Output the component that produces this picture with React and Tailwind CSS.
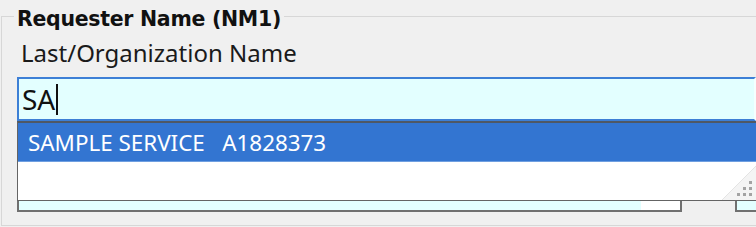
export default function App() {
  return (
    <div className="relative h-[227px] w-[756px] overflow-hidden bg-[#f0f0f0] font-['Noto_Sans',sans-serif]">
      <div className="relative ml-[1px] mt-[16px] h-[210px] border-b border-l border-t border-[#d7d7d7]">
        <div className="absolute left-[12px] top-[-9px] bg-[#f0f0f0] px-[3px] font-['DejaVu_Sans',sans-serif] text-[20.5px] font-bold leading-[22px] tracking-[-0.3px] text-[#111]">
          Requester Name (NM1)
        </div>

        <div className="pl-[19px] pt-[24px] text-[24px] leading-[24px] text-[#1a1a1a]">
          Last/Organization Name
        </div>

        <div className="ml-[15px] mt-[12px] flex h-[44px] items-center border-2 border-[#3d7fd6] border-r-[#f4ffff] bg-[#e3ffff] pl-[3px] text-[28px] leading-[38px] text-[#111]">
          <span>SA</span>
          <span className="ml-[1px] h-[31px] w-[2px] bg-[#111]" />
        </div>

        <div className="ml-[15px] mt-[50px] flex items-start">
          <div className="flex h-[41px] w-[665px] border-b-2 border-l-2 border-r-2 border-[#707070]">
            <div className="flex-1 bg-[#e3ffff]" />
            <div className="w-[39px] bg-white" />
          </div>
          <div className="ml-[53px] h-[41px] flex-1 border-b-2 border-l-2 border-[#707070] bg-[#e3ffff]" />
        </div>

        {/* autocomplete dropdown */}
        <div className="absolute left-[15px] top-[104px] h-[80px] w-[742px] border border-[#646464] border-t-2 border-t-[#4f5864] bg-white">
          <div className="flex h-[39px] items-center border-b border-[#6f9fe0] bg-[#3375d1] pl-[10px] text-[22.4px] leading-[31px] text-white">
            SAMPLE SERVICE&nbsp;&nbsp;&nbsp;A1828373
          </div>
          <svg className="absolute bottom-0 right-[2px]" width="34" height="34" viewBox="0 0 34 34">
            <polygon points="34,0 34,34 0,34" fill="#f4f4f4" />
            <line x1="34" y1="0" x2="0" y2="34" stroke="#e4e4e4" />
            <rect x="27" y="15" width="3" height="3" fill="#a3a3a3" />
            <rect x="21" y="21" width="3" height="3" fill="#a3a3a3" />
            <rect x="27" y="21" width="3" height="3" fill="#a3a3a3" />
            <rect x="15" y="27" width="3" height="3" fill="#a3a3a3" />
            <rect x="21" y="27" width="3" height="3" fill="#a3a3a3" />
            <rect x="27" y="27" width="3" height="3" fill="#a3a3a3" />
          </svg>
        </div>
      </div>
    </div>
  );
}
